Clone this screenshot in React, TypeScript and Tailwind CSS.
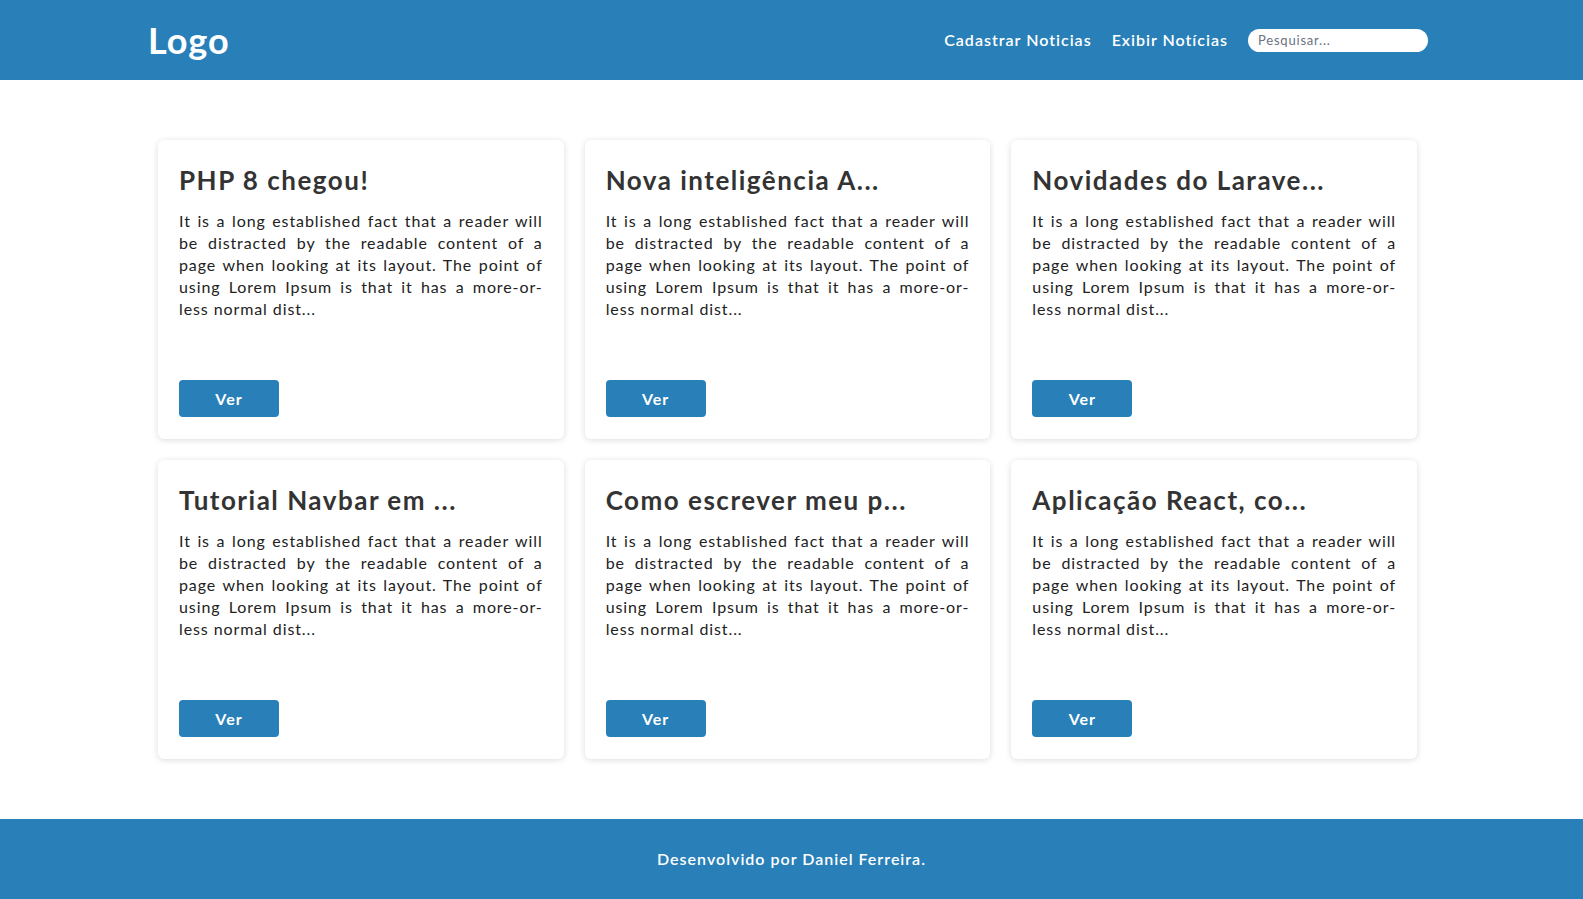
import React from "react";

const posts = [
  "PHP 8 chegou!",
  "Nova inteligência A...",
  "Novidades do Larave...",
  "Tutorial Navbar em ...",
  "Como escrever meu p...",
  "Aplicação React, co...",
];

const resumo =
  "It is a long established fact that a reader will be distracted by the readable content of a page when looking at its layout. The point of using Lorem Ipsum is that it has a more-or-less normal dist...";

function Card({ titulo }: { titulo: string }) {
  return (
    <div className="flex h-[299px] flex-col justify-between rounded-md bg-white px-[21px] pt-[20px] pb-[22px] shadow-[0_1px_6px_rgba(0,0,0,0.14)]">
      <div>
        <h2 className="text-[26px] leading-[40px] font-bold tracking-[1.5px] text-[#333333]">
          {titulo}
        </h2>
        <p className="mt-[10px] text-justify text-[16px] leading-[22px] tracking-[0.9px] text-[#222222]">
          {resumo}
        </p>
      </div>
      <button className="h-[37px] w-[100px] rounded bg-[#2980b9] text-[16px] font-bold tracking-[1px] text-white">
        Ver
      </button>
    </div>
  );
}

export default function App() {
  return (
    <div className="flex min-h-screen flex-col bg-white font-['Lato',sans-serif] tracking-[1px]">
      <header className="flex h-[80px] items-center justify-between bg-[#2980b9] pr-[155px] pl-[148px]">
        <h1 className="text-[36px] font-bold tracking-[1px] text-white">Logo</h1>
        <nav className="flex items-center gap-[20px]">
          <a href="#" className="text-[16px] font-semibold text-white">
            Cadastrar Noticias
          </a>
          <a href="#" className="text-[16px] font-semibold text-white">
            Exibir Notícias
          </a>
          <input
            type="text"
            placeholder="Pesquisar..."
            className="h-[23px] w-[180px] rounded-full bg-white px-[10px] text-[13px] tracking-[0.8px] text-gray-700 outline-none placeholder:text-gray-500"
          />
        </nav>
      </header>

      <main className="flex-1 px-[158px] py-[60px]">
        <div className="grid w-[1259px] grid-cols-3 gap-[21px]">
          {posts.map((p) => (
            <Card key={p} titulo={p} />
          ))}
        </div>
      </main>

      <footer className="flex h-[80px] items-center justify-center bg-[#2980b9]">
        <p className="text-[16px] font-semibold text-white">
          Desenvolvido por Daniel Ferreira.
        </p>
      </footer>
    </div>
  );
}
